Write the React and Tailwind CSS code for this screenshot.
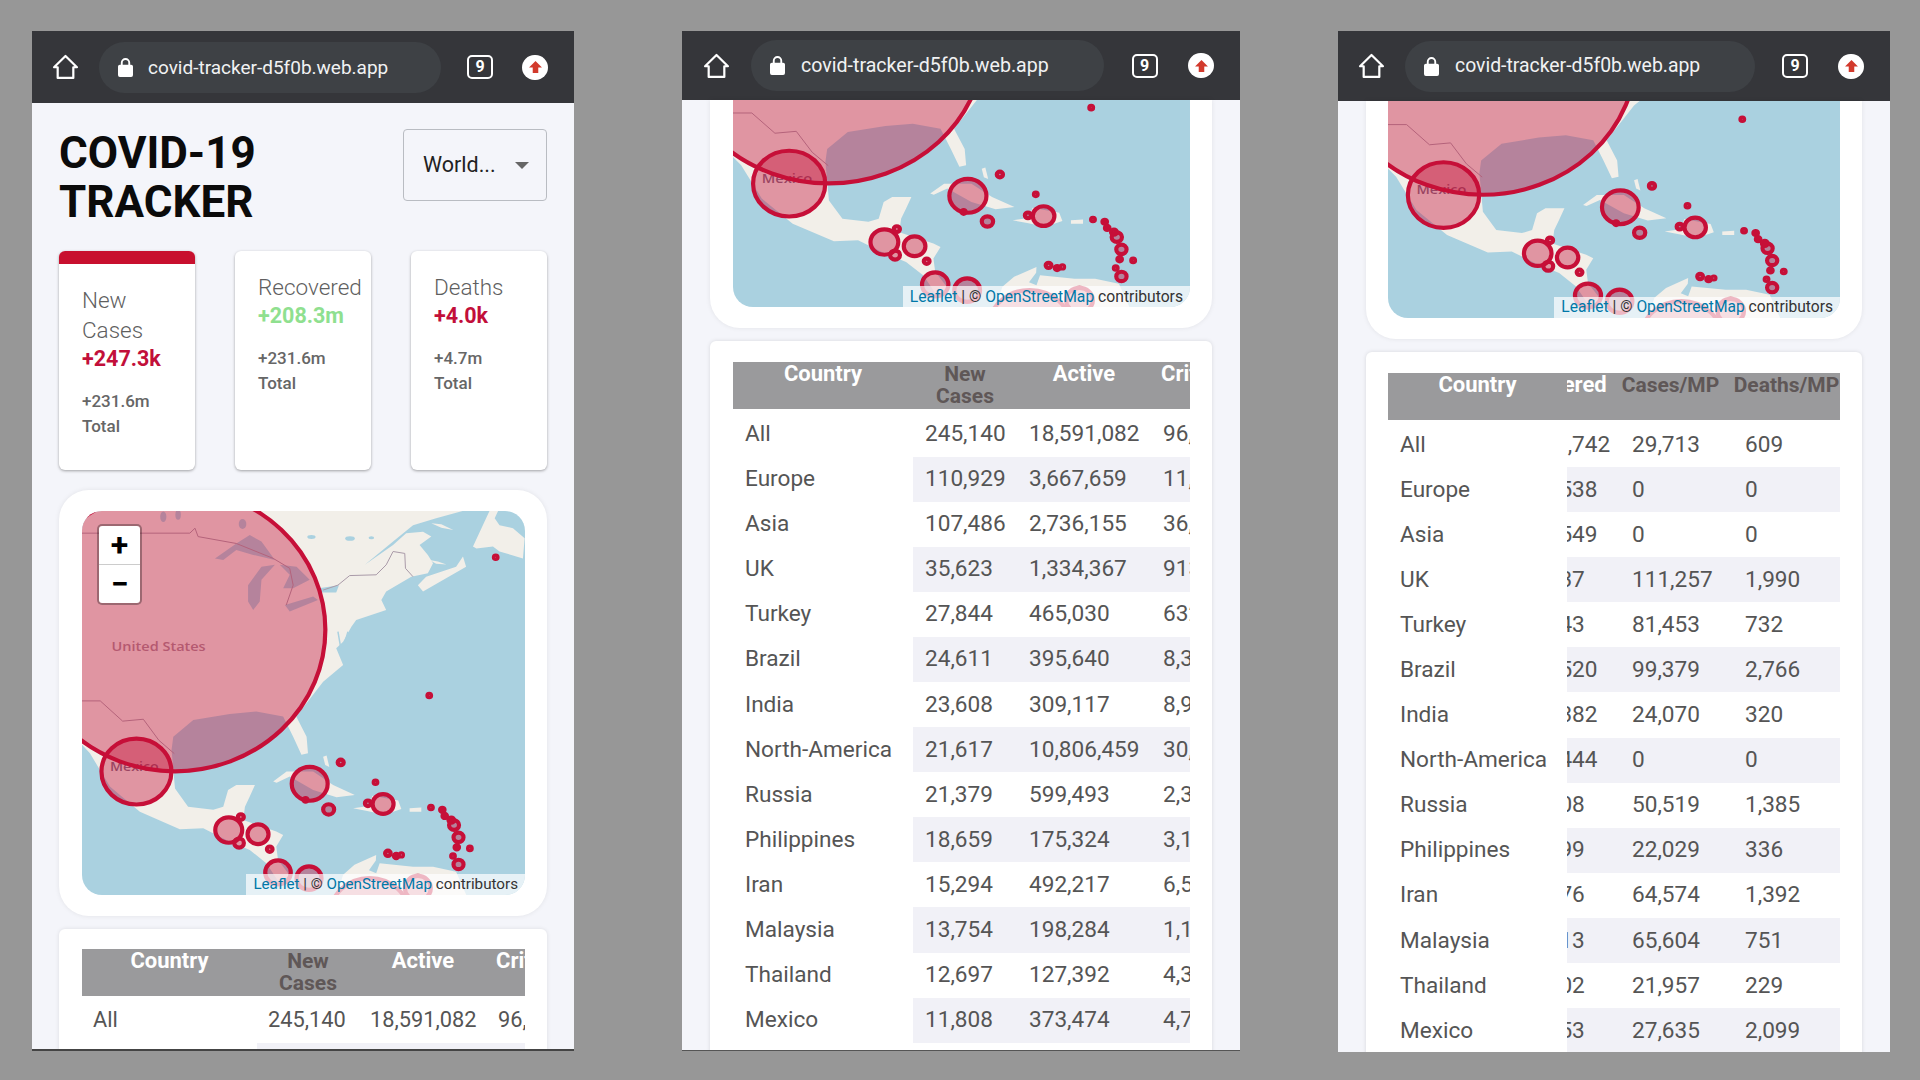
import React from "react";

const rows = [
  { name: "All", fresh: "245,140", active: "18,591,082", critical: "96,214", recovered: "208,323,742", cases: "29,713", deaths: "609" },
  { name: "Europe", fresh: "110,929", active: "3,667,659", critical: "11,482", recovered: "44,120,538", cases: "0", deaths: "0" },
  { name: "Asia", fresh: "107,486", active: "2,736,155", critical: "36,390", recovered: "53,410,549", cases: "0", deaths: "0" },
  { name: "UK", fresh: "35,623", active: "1,334,367", critical: "913", recovered: "2,714,337", cases: "111,257", deaths: "1,990" },
  { name: "Turkey", fresh: "27,844", active: "465,030", critical: "632", recovered: "6,400,343", cases: "81,453", deaths: "732" },
  { name: "Brazil", fresh: "24,611", active: "395,640", critical: "8,318", recovered: "20,170,520", cases: "99,379", deaths: "2,766" },
  { name: "India", fresh: "23,608", active: "309,117", critical: "8,944", recovered: "33,270,382", cases: "24,070", deaths: "320" },
  { name: "North-America", fresh: "21,617", active: "10,806,459", critical: "30,110", recovered: "40,330,444", cases: "0", deaths: "0" },
  { name: "Russia", fresh: "21,379", active: "599,493", critical: "2,300", recovered: "6,612,108", cases: "50,519", deaths: "1,385" },
  { name: "Philippines", fresh: "18,659", active: "175,324", critical: "3,120", recovered: "2,150,199", cases: "22,029", deaths: "336" },
  { name: "Iran", fresh: "15,294", active: "492,217", critical: "6,510", recovered: "4,610,176", cases: "64,574", deaths: "1,392" },
  { name: "Malaysia", fresh: "13,754", active: "198,284", critical: "1,140", recovered: "1,850,113", cases: "65,604", deaths: "751" },
  { name: "Thailand", fresh: "12,697", active: "127,392", critical: "4,310", recovered: "1,040,102", cases: "21,957", deaths: "229" },
  { name: "Mexico", fresh: "11,808", active: "373,474", critical: "4,720", recovered: "3,410,153", cases: "27,635", deaths: "2,099" },
];

// [x, y, radius] in the map's own units, radius in screen px
const markers = [
  [957, 1139, 40], [1097, 1067, 13],
  [392, 391, 150.5], [280, 762, 35], [783, 794, 18], [771, 836, 2], [873, 738, 3], [974, 790, 1.8], [952, 845, 3],
  [996, 847, 10.5], [838, 861, 5.5], [1135, 856, 1.8], [1168, 862, 2.2], [1175, 878, 2.2], [1194, 889, 2.8],
  [1202, 902, 5], [1215, 934, 5], [1210, 960, 2.2], [1248, 963, 1.8], [1199, 983, 1.8], [1215, 1005, 5],
  [1010, 976, 2.8], [1034, 983, 2.2], [1049, 980, 1.6], [548, 915, 13.5], [583, 881, 3], [578, 949, 4.8],
  [633, 926, 10.5], [667, 965, 2.8], [691, 1026, 12.8], [781, 1041, 12.5], [1130, 563, 1.8], [1323, 201, 1.8],
];

const LAND = "#f2efe9";
const WATER = "#aad1e0";

function Marker({ m }) {
  return (
    <ellipse
      cx={m[0]}
      cy={m[1]}
      rx={m[2] * 2.9}
      ry={m[2] * 2.46}
      fill="#c60f38"
      fillOpacity="0.4"
      stroke="#c60f38"
      strokeWidth="4.2"
      vectorEffect="non-scaling-stroke"
    />
  );
}

function MapView({ viewBox, className = "", credit, children }) {
  return (
    <div className={`relative overflow-hidden ${className}`}>
      <svg viewBox={viewBox} preserveAspectRatio="none" className="block w-full h-full">
        <rect x="122" y="80" width="1286" height="1005" fill={WATER} />
        {/* north america down to panama */}
        <path fill={LAND} d="M122 70H1267L1150 99L1083 117L1025 160L943 221L1025 169L1063 138L1112 134L1136 147L1102 169L1126 195L1141 217L1126 243L1078 252L1005 291L991 313L1005 339L918 365L904 383L880 422L860 439L880 483L822 527L744 618L774 671L778 714L759 718L735 671L706 618L628 605L551 611L445 627L387 671L382 705L392 806L430 854L503 862L532 854L546 810L570 797L624 797L609 827L595 854L590 889L686 919L706 928L686 958L691 993L730 1040L700 1060L657 1002L609 967L541 941L474 910L406 913L290 867L203 801L145 714L122 692Z" />
        <path fill={LAND} d="M1097 274L1112 291L1237 226L1228 199L1208 226L1121 252Z" />
        <path fill={LAND} d="M1310 70H1335L1320 99L1334 117L1373 125L1407 151L1402 204L1334 186L1315 173L1267 178L1257 173Z" />
        <path fill={LAND} d="M1136 112L1165 115L1200 130L1165 124Z" />
        <path fill={LAND} d="M1131 208L1155 212L1180 220L1150 218Z" />
        <path fill={LAND} d="M677 788L716 762L793 762L851 797L914 823L861 829L793 810L725 775L687 791Z" />
        <path fill={LAND} d="M822 723L832 720L840 750L828 745Z" />
        <path fill={LAND} d="M909 858L955 852L965 825L1040 838L1049 860L1000 875L950 865Z" />
        <path fill={LAND} d="M1073 858L1107 856L1107 867L1073 867Z" />
        <path fill={LAND} d="M860 1090L880 1032L913 1006L976 980L975 995L955 1020L976 1028L986 1002L1083 1011L1141 1011L1208 1024L1240 1090Z" />
        {/* lakes go under the big marker so they come out darker */}
        <path fill={WATER} d="M508 204L570 165L609 143L643 160L682 208L619 195L570 182L532 208Z" />
        <path fill={WATER} d="M604 274L643 226L682 221L643 260L638 317L619 339L604 317Z" />
        <path fill={WATER} d="M696 221L745 226L783 260L735 282L706 282L725 247Z" />
        <path fill={WATER} d="M711 326L793 304L807 313L725 343Z" />
        <path fill={WATER} d="M810 282L868 274L860 293L817 293Z" />
        <ellipse cx="588" cy="114" rx="11" ry="13" fill={WATER} />
        <ellipse cx="358" cy="95" rx="9" ry="14" fill={WATER} />
        <ellipse cx="401" cy="90" rx="8" ry="13" fill={WATER} />
        <ellipse cx="788" cy="148" rx="12" ry="5" fill={WATER} />
        <ellipse cx="900" cy="152" rx="14" ry="6" fill={WATER} />
        <ellipse cx="962" cy="150" rx="8" ry="4" fill={WATER} />
        <path d="M865 396L875 448M894 396L880 440" fill="none" stroke={WATER} strokeWidth="1.5" vectorEffect="non-scaling-stroke" />
        <path d="M122 138H435L450 125L459 147L570 165L677 204L725 230L735 274L715 326M822 287L865 274L899 249L976 247L1005 221L1025 186L1059 191L1061 230L1083 252M122 577H175L240 630L300 625L345 680L390 715" fill="none" stroke="#a99aa8" strokeWidth="1" vectorEffect="non-scaling-stroke" />
        <text x="208" y="446" fontSize="33" fontWeight="600" fontFamily="'Open Sans', sans-serif" fill="#a98a96" textLength="273" lengthAdjust="spacingAndGlyphs">United States</text>
        <text x="203" y="760" fontSize="33" fontWeight="600" fontFamily="'Open Sans', sans-serif" fill="#7d6a80" textLength="142" lengthAdjust="spacingAndGlyphs">Mexico</text>
        {markers.map((m, i) => <Marker key={i} m={m} />)}
      </svg>
      {children}
      <div className={`absolute right-0 bottom-0 h-[21px] pl-[7px] pr-[7px] bg-white/70 leading-[21px] text-[#333] whitespace-nowrap ${credit}`}>
        <span className="text-[#0078a8]">Leaflet</span> | © <span className="text-[#0078a8]">OpenStreetMap</span> contributors
      </div>
    </div>
  );
}

function BrowserBar({ className, homeBox, pill, tabBox, text }) {
  return (
    <div className={`flex items-center shrink-0 bg-[#35363a] ${className}`}>
      <div className={`flex justify-center shrink-0 ${homeBox}`}>
        <svg width="29" height="28" viewBox="0 0 24 24" fill="none" stroke="#fff" strokeWidth="1.9" strokeLinejoin="round">
          <path d="M12 2.6L2.2 12.2h3.1v9.2h13.4v-9.2h3.1z" />
        </svg>
      </div>
      <div className={`flex items-center shrink-0 rounded-full bg-[#3e4145] h-[51px] pl-[19px] ${pill}`}>
        <svg width="15" height="19" viewBox="0 0 16 20" preserveAspectRatio="none" fill="#fff">
          <path d="M14 7h-1V5a5 5 0 0 0-10 0v2H2a2 2 0 0 0-2 2v9a2 2 0 0 0 2 2h12a2 2 0 0 0 2-2V9a2 2 0 0 0-2-2zM5 5a3 3 0 0 1 6 0v2H5z" />
        </svg>
        <span className={`leading-none text-[#f1f2f3] whitespace-nowrap ${text}`}>covid-tracker-d5f0b.web.app</span>
      </div>
      <div className={`flex justify-center shrink-0 ${tabBox}`}>
        <div className="flex items-center justify-center w-[26px] h-[24px] rounded-[5px] border-2 border-white text-white text-[16px] font-bold leading-none">9</div>
      </div>
      <div className="flex justify-center shrink-0 w-[32px]">
        <div className="flex items-center justify-center w-[26px] h-[25px] rounded-full bg-white">
          <svg width="13" height="12" viewBox="0 0 14 13" fill="#d23a2c">
            <path d="M7 0l7 7H10v6H4V7H0z" />
          </svg>
        </div>
      </div>
    </div>
  );
}

function StatCard({ label, value, valueColor, total, active }) {
  return (
    <div className="w-[136px] h-[219px] rounded-[6px] bg-white overflow-hidden shadow-[0_1px_3px_rgba(0,0,0,0.35)]">
      {active && <div className="h-[13px] bg-[#c8102e]" />}
      <div className="pl-[23px] pr-[2px] pt-[21px]">
        <div className="text-[22.5px] leading-[30px] font-light text-[#5f5f5f]">{label}</div>
        <div className={`text-[21.5px] leading-[27px] font-bold ${valueColor}`}>{value}</div>
        <div className="mt-[17px] text-[17px] leading-[24.5px] font-medium text-[#666]">
          {total}
          <br />
          Total
        </div>
      </div>
    </div>
  );
}

function DataTable({ cols, head, cells, items, size, padClass, firstRow }) {
  return (
    <table className={`table-fixed w-full border-collapse ${size}`}>
      <colgroup>
        {cols.map((c, i) => <col key={i} className={c} />)}
      </colgroup>
      <thead>
        <tr className="h-[47px] bg-[#9a9a9c]">{head}</tr>
      </thead>
      <tbody className="text-[#555]">
        {items.map((r, i) => (
          <tr key={r.name} className={i === 0 ? firstRow : "h-[45.1px]"}>
            <td className={`whitespace-nowrap overflow-hidden ${padClass} ${i === 0 ? "pt-[2px]" : ""}`}>{r.name}</td>
            {cells(r).map((v, j) => (
              <td key={j} className={`whitespace-nowrap overflow-hidden ${padClass} ${i === 0 ? "pt-[2px]" : ""} ${i % 2 === 1 ? "bg-[#f1f1f7]" : ""}`}>{v}</td>
            ))}
          </tr>
        ))}
      </tbody>
    </table>
  );
}

const th = "align-top pt-[1px] leading-[22px] font-bold overflow-hidden";

function ActiveHead({ pad }) {
  return (
    <>
      <th className={`${th} text-[22px] text-white`}>Country</th>
      <th className={`${th} text-[21px] text-[#5f5757]`}>New Cases</th>
      <th className={`${th} text-[22px] text-white`}>Active</th>
      <th className={`${th} text-[22px] text-white text-left whitespace-nowrap ${pad}`}>Critical</th>
    </>
  );
}

export default function App() {
  return (
    <div className="flex items-start w-[1920px] h-[1080px] overflow-hidden bg-[#979797] pl-[32px] pt-[31px] font-['Roboto',sans-serif]">
      {/* first phone: top of the page */}
      <div className="flex flex-col shrink-0 w-[542px] h-[1020px] overflow-hidden bg-[#f4f5fa] border-b-2 border-[#444]">
        <BrowserBar className="h-[72px]" homeBox="w-[67px]" pill="w-[342px]" tabBox="w-[78px]" text="ml-[15px] text-[19px]" />
        <div className="px-[27px]">
          <div className="flex justify-between items-start pt-[26px]">
            <h1 className="text-[44px] leading-[49px] font-bold text-[#0b0b0b]">
              COVID-19
              <br />
              TRACKER
            </h1>
            <div className="flex items-center justify-between w-[144px] h-[72px] rounded-[4px] border border-[#b9bcc2] pl-[19px] pr-[17px] text-[21.5px] text-[#222]">
              World...
              <svg width="14" height="7" viewBox="0 0 14 7" fill="#666"><path d="M0 0h14L7 7z" /></svg>
            </div>
          </div>
          <div className="flex justify-between mt-[24px]">
            <StatCard active label={<>New<br />Cases</>} value="+247.3k" valueColor="text-[#c20f3a]" total="+231.6m" />
            <StatCard label="Recovered" value="+208.3m" valueColor="text-[#8fe08f]" total="+231.6m" />
            <StatCard label="Deaths" value="+4.0k" valueColor="text-[#c20f3a]" total="+4.7m" />
          </div>
          <div className="mt-[20px] h-[426px] rounded-[30px] bg-white pl-[23px] pr-[22px] py-[21px] shadow-[0_0_5px_rgba(0,0,0,0.08)]">
            <MapView viewBox="122 80 1286 1005" credit="text-[15.2px]" className="h-[384px] rounded-[20px]">
              <div className="absolute left-[15px] top-[13px] w-[45px] h-[81px] rounded-[5px] border-2 border-black/30 bg-white bg-clip-padding flex flex-col text-black font-bold text-[32px] leading-none">
                <div className="flex-1 flex items-center justify-center border-b border-[#ccc]">+</div>
                <div className="flex-1 flex items-center justify-center">−</div>
              </div>
            </MapView>
          </div>
          <div className="mt-[13px] rounded-[6px] bg-white px-[23px] pt-[20px] h-[200px] shadow-[0_0_4px_rgba(0,0,0,0.1)]">
            <DataTable
              cols={["w-[175px]", "w-[102px]", "w-[128px]", "w-[38px]"]}
              size="text-[21.8px]"
              padClass="pl-[11px]"
              firstRow="h-[47px]"
              head={<ActiveHead pad="pl-[9px]" />}
              items={rows.slice(0, 2)}
              cells={(r) => [r.fresh, r.active, r.critical]}
            />
          </div>
        </div>
      </div>

      {/* second phone: scrolled to the table */}
      <div className="flex flex-col shrink-0 ml-[108px] w-[558px] h-[1020px] overflow-hidden bg-[#f4f5fa] border-b border-[#555]">
        <BrowserBar className="h-[69px]" homeBox="w-[69px]" pill="w-[353px]" tabBox="w-[81px]" text="ml-[16px] text-[19.6px]" />
        <div className="pl-[28px] pr-[28px]">
          <div className="rounded-b-[30px] bg-white pl-[23px] pr-[22px] pb-[21px] shadow-[0_0_5px_rgba(0,0,0,0.08)]">
            <MapView viewBox="122 543 1286 542" credit="text-[15.7px]" className="h-[207px] rounded-b-[20px]" />
          </div>
          <div className="mt-[13px] rounded-[6px] bg-white pl-[23px] pr-[22px] pt-[21px] h-[730px] shadow-[0_0_4px_rgba(0,0,0,0.12)]">
            <DataTable
              cols={["w-[180px]", "w-[104px]", "w-[134px]", "w-[39px]"]}
              size="text-[22.6px]"
              padClass="pl-[12px]"
              firstRow="h-[47.5px]"
              head={<ActiveHead pad="pl-[10px]" />}
              items={rows}
              cells={(r) => [r.fresh, r.active, r.critical]}
            />
          </div>
        </div>
      </div>

      {/* third phone: table scrolled sideways, first column stays */}
      <div className="flex flex-col shrink-0 ml-[98px] w-[552px] h-[1021px] overflow-hidden bg-[#f4f5fa]">
        <BrowserBar className="h-[70px]" homeBox="w-[67px]" pill="w-[350px]" tabBox="w-[80px]" text="ml-[16px] text-[19.4px]" />
        <div className="pl-[28px] pr-[28px]">
          <div className="rounded-b-[30px] bg-white px-[22px] pb-[21px] shadow-[0_0_5px_rgba(0,0,0,0.08)]">
            <MapView viewBox="122 515 1286 570" credit="text-[15.6px]" className="h-[217px] rounded-b-[20px]" />
          </div>
          <div className="mt-[13px] rounded-[6px] bg-white px-[22px] pt-[21px] h-[730px] shadow-[0_0_4px_rgba(0,0,0,0.12)]">
            <DataTable
              cols={["w-[179px]", "w-[53px]", "w-[113px]", "w-[107px]"]}
              size="text-[22.6px]"
              padClass="pl-[12px]"
              firstRow="h-[47px]"
              head={
                <>
                  <th className={`${th} text-[22px] text-white`}>Country</th>
                  <th className={`${th} text-[22px] text-white text-left`}>
                    <span className="block -ml-[65px] whitespace-nowrap">Recovered</span>
                  </th>
                  <th className={`${th} text-[21px] text-[#5f5757] whitespace-nowrap pr-[12px]`}>Cases/MP</th>
                  <th className={`${th} text-[21px] text-[#5f5757] whitespace-nowrap`}>Deaths/MP</th>
                </>
              }
              items={rows}
              cells={(r) => [
                <span key="recovered" className="block -ml-[92px]">{r.recovered}</span>,
                r.cases,
                r.deaths,
              ]}
            />
          </div>
        </div>
      </div>
    </div>
  );
}
